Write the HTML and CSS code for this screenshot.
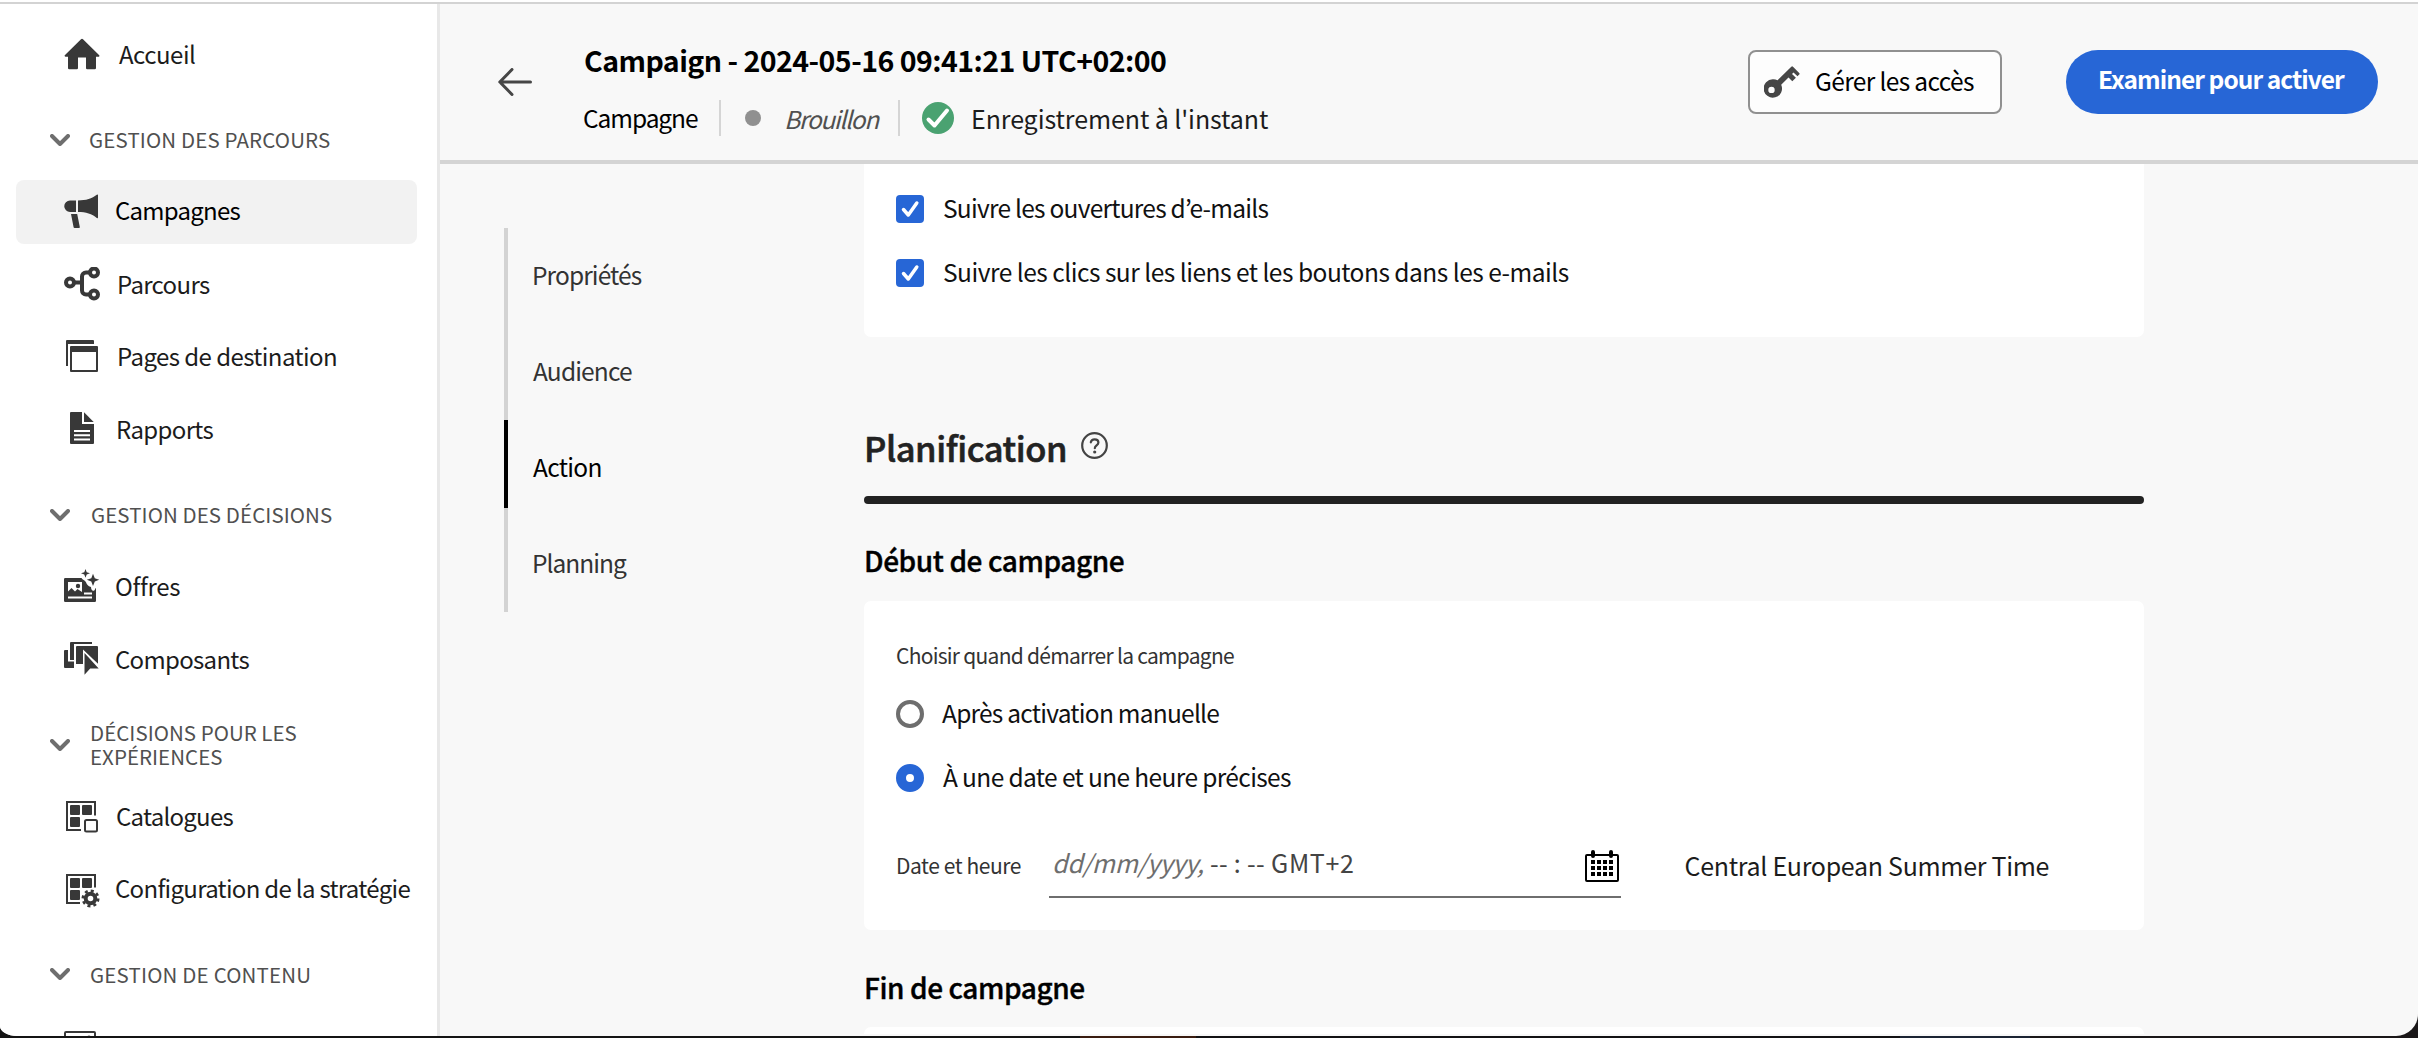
FILE: index.html
```html
<!DOCTYPE html>
<html lang="fr">
<head>
<meta charset="utf-8">
<title>Campagne</title>
<link rel="stylesheet" href="styles.css">
</head>
<body>
<div class="window">
  <nav class="sidebar">
    <a class="nav-item nav-home">
      <svg class="nav-icon" viewBox="0 0 36 36"><path d="M17 2.200a1.400 1.400 0 0 1 2 0L35 18a1 1 0 0 1-.7 1.800H32V31a1.200 1.200 0 0 1-1.200 1.200H23.200A1.200 1.200 0 0 1 22 31V20.500H14V31a1.200 1.200 0 0 1-1.200 1.200H5.200A1.200 1.200 0 0 1 4 31V19.800H1.600A1 1 0 0 1 1 18z"/></svg>
      <span>Accueil</span>
    </a>
    <div class="nav-group">
      <svg class="chevron" viewBox="0 0 20 12"><path d="M2 2l8 8 8-8"/></svg>
      <span>GESTION DES PARCOURS</span>
    </div>
    <a class="nav-item nav-campaigns selected">
      <svg class="nav-icon" viewBox="0 0 36 36"><path d="M12 6.500V18H6A5.700 5.700 0 0 1 6 6.500zM14 6.500C22 6.500 28 4.500 32.800.8 33.400.4 34 .6 34 1.200V23.500c0 .7-.7.8-1.200.4C28 20 22 18 14 18zM7 20h6.200l2.600 13a.9.9 0 0 1-.9 1.100H10.600a1 1 0 0 1-1-.8z"/></svg>
      <span>Campagnes</span>
    </a>
    <a class="nav-item nav-journeys">
      <svg class="nav-icon line" viewBox="0 0 36 36"><g stroke-width="4"><circle cx="6" cy="15.500" r="4"/><circle cx="30" cy="5.500" r="4"/><circle cx="30" cy="27.500" r="4"/><path d="M10 15.500h8M26 5.500h-4a4 4 0 0 0-4 4v14a4 4 0 0 0 4 4h4"/></g></svg>
      <span>Parcours</span>
    </a>
    <a class="nav-item nav-pages">
      <svg class="nav-icon" viewBox="0 0 36 36"><path d="M3 0h26a1 1 0 0 1 1 1v3H4v22H2V1a1 1 0 0 1 1-1z"/><path fill-rule="evenodd" d="M7 6h26a1 1 0 0 1 1 1v24a1 1 0 0 1-1 1H7a1 1 0 0 1-1-1V7a1 1 0 0 1 1-1zm1 6v18h24V12z"/></svg>
      <span>Pages de destination</span>
    </a>
    <a class="nav-item nav-reports">
      <svg class="nav-icon" viewBox="0 0 36 36"><path fill-rule="evenodd" d="M7 0h11v12h12v19a1 1 0 0 1-1 1H7a1 1 0 0 1-1-1V1a1 1 0 0 1 1-1zm3 18v2h16v-2zm0 4.300v2h16v-2zm0 4.300v2h16v-2z"/><path d="M20 .3L29.700 10H20z"/></svg>
      <span>Rapports</span>
    </a>
    <div class="nav-group nav-decisions">
      <svg class="chevron" viewBox="0 0 20 12"><path d="M2 2l8 8 8-8"/></svg>
      <span>GESTION DES DÉCISIONS</span>
    </div>
    <a class="nav-item nav-offers">
      <svg class="nav-icon" viewBox="0 0 36 36"><path fill-rule="evenodd" d="M1.200 9H17.500c1 2 3.500 2.200 4.500 4.200.8 1.800 1.800 4 5 4.800.2 2.500 1 3.800 2.200 3.800 1 0 1.800-1 2.300-2.600l.5-.2V31.800A1.200 1.200 0 0 1 30.800 33H1.200A1.200 1.200 0 0 1 0 31.800V10.200A1.200 1.200 0 0 1 1.200 9zM4 13v9.500l3.500-3.500 3.500 3.500 2.500-2.500 4.500 3V13zM20 23.500v2h8v-2zM4 27.500v2h24v-2z"/><circle cx="14" cy="17" r="2.200"/><path d="M21.500 0l1.200 3.200L26 4.300l-3.300 1.200-1.200 3.300-1.200-3.300L17 4.300l3.300-1.100zM29 4.800l1.800 4.400 4.400 1.600-4.400 1.700L29 17l-1.700-4.500-4.500-1.700 4.500-1.600z"/></svg>
      <span>Offres</span>
    </a>
    <a class="nav-item nav-components">
      <svg class="nav-icon" viewBox="0 0 36 36"><path d="M1 8h3v11.500h6V26H1a1 1 0 0 1-1-1V9a1 1 0 0 1 1-1z"/><path d="M7 0h21v2H10v16H6V1a1 1 0 0 1 1-1z"/><path d="M13 4h20a1 1 0 0 1 1 1v16.800L19 7.500V22h-7V5a1 1 0 0 1 1-1z"/><path d="M20.500 11L34.700 26.500h-8.500L20.500 32.800z"/></svg>
      <span>Composants</span>
    </a>
    <div class="nav-group nav-experience">
      <svg class="chevron" viewBox="0 0 20 12"><path d="M2 2l8 8 8-8"/></svg>
      <span>DÉCISIONS POUR LES<br>EXPÉRIENCES</span>
    </div>
    <a class="nav-item nav-catalogs">
      <svg class="nav-icon" viewBox="0 0 36 36"><path class="frame" d="M31 16.500V3H3v28h14"/><rect x="6" y="6" width="10" height="10" rx="1"/><rect x="18" y="6" width="10" height="10" rx="1"/><rect x="6" y="18" width="10" height="10" rx="1"/><rect class="frame" x="21" y="21" width="12" height="11.500" rx="1.500"/></svg>
      <span>Catalogues</span>
    </a>
    <a class="nav-item nav-strategy">
      <svg class="nav-icon" viewBox="0 0 36 36"><path class="frame" d="M31 15.500V3H3v28h13"/><rect x="6" y="6" width="10" height="10" rx="1"/><rect x="18" y="6" width="10" height="10" rx="1"/><rect x="6" y="18" width="10" height="10" rx="1"/><circle class="gear-body" cx="26.500" cy="26.500" r="4.800"/><circle class="gear-teeth" cx="26.500" cy="26.500" r="7.700"/></svg>
      <span>Configuration de la stratégie</span>
    </a>
    <div class="nav-group nav-content">
      <svg class="chevron" viewBox="0 0 20 12"><path d="M2 2l8 8 8-8"/></svg>
      <span>GESTION DE CONTENU</span>
    </div>
    <a class="nav-item">
      <svg class="nav-icon" viewBox="0 0 36 36"><rect class="frame" x="1" y="3" width="30" height="26" rx="1"/><circle cx="25" cy="9" r="2.400"/></svg>
    </a>
  </nav>

  <div class="workspace">
    <header class="topbar">
      <svg class="back" viewBox="0 0 34 28"><path d="M32.500 14H2M14 1.500L1.800 14 14 26.500"/></svg>
      <div class="heading">
        <h1>Campaign - 2024-05-16 09:41:21 UTC+02:00</h1>
        <div class="meta">
          <span class="kind">Campagne</span>
          <span class="status"><i class="dot"></i><em>Brouillon</em></span>
          <svg class="saved-icon" viewBox="0 0 32 32"><circle cx="16" cy="16" r="16"/><path d="M6.500 17.500l6 6L25 8.500"/></svg>
          <span class="saved">Enregistrement à l'instant</span>
        </div>
      </div>
      <div class="actions">
        <button class="btn-access">
          <svg class="key" viewBox="0 0 36 32"><path fill-rule="evenodd" d="M9.200 13.300c1.600 0 3 .4 4.300 1L27.300.8a1.200 1.200 0 0 1 1.700 0l6.200 6.200a1 1 0 0 1 0 1.500l-1.700 1.700-4-3.800-1.500 1.500 3.900 3.800-3.600 3.500-3.800-3.700-7.300 7.200A9.200 9.200 0 1 1 9.200 13.300zM7.500 20.700a3.200 3.200 0 1 0 0 6.400 3.200 3.200 0 0 0 0-6.400z"/></svg>
          <span>Gérer les accès</span>
        </button>
        <button class="btn-review"><span>Examiner pour activer</span></button>
      </div>
    </header>

    <div class="content">
      <ul class="steps">
        <li class="s-properties">Propriétés</li>
        <li class="s-audience">Audience</li>
        <li class="s-action current">Action</li>
        <li class="s-planning">Planning</li>
      </ul>

      <main class="form">
        <section class="card tracking">
          <label class="option"><svg class="box" viewBox="0 0 28 28"><path d="M7.500 14.500l4.800 5.500L20.800 8"/></svg><span class="t-opens">Suivre les ouvertures d’e-mails</span></label>
          <label class="option"><svg class="box" viewBox="0 0 28 28"><path d="M7.500 14.500l4.800 5.500L20.800 8"/></svg><span class="t-clicks">Suivre les clics sur les liens et les boutons dans les e-mails</span></label>
        </section>

        <div class="section-title">
          <h2>Planification</h2>
          <svg class="help" viewBox="0 0 27 27"><circle cx="13.500" cy="13.500" r="12.300"/><path d="M9.800 10.300C10.200 8.300 11.600 7.300 13.600 7.300c2.200 0 3.800 1.200 3.800 3.200 0 2.800-3.600 2.900-3.600 5.700"/><circle class="point" cx="13.700" cy="20" r="1.600"/></svg>
        </div>
        <div class="rule"></div>

        <h3 class="start-title">Début de campagne</h3>
        <section class="card schedule">
          <p class="hint">Choisir quand démarrer la campagne</p>
          <label class="option"><i class="radio"></i><span class="t-manual">Après activation manuelle</span></label>
          <label class="option"><i class="radio checked"></i><span class="t-date">À une date et une heure précises</span></label>
          <div class="date-row">
            <span class="date-label">Date et heure</span>
            <div class="date-field">
              <em>dd/mm/yyyy,</em><span class="time">-- : --</span><span class="zone">GMT+2</span>
              <svg class="calendar" viewBox="0 0 34 32"><rect class="outline" x="1" y="5" width="32" height="26" rx="1"/><path class="rings" d="M8 2v4M26 2v4"/><path d="M6 10h4v4H6zM12 10h4v4h-4zM18 10h4v4h-4zM24 10h4v4h-4zM6 16h4v4H6zM12 16h4v4h-4zM18 16h4v4h-4zM24 16h4v4h-4zM6 22h4v4H6zM12 22h4v4h-4zM18 22h4v4h-4zM24 22h4v4h-4z"/></svg>
            </div>
            <span class="timezone">Central European Summer Time</span>
          </div>
        </section>

        <h3 class="end-title">Fin de campagne</h3>
        <section class="card ending"></section>
      </main>
    </div>
  </div>
</div>
</body>
</html>
```
FILE: styles.css
```css
* { box-sizing: border-box; margin: 0; padding: 0; }

html, body { height: 1038px; overflow: hidden; }

body {
  background: linear-gradient(90deg, #141414 0 1080px, #3a1c10 1080px 1196px, #121113 1196px 1900px, #1b2433 1900px 2030px, #1a1718 2030px);
  font-family: "Noto Sans CJK JP", "Source Sans Pro", sans-serif;
  font-size: 24.5px;
  color: #1c1c1c;
}

.window {
  display: flex;
  height: 1036px;
  padding-top: 4px;
  overflow: hidden;
  background: linear-gradient(#fff 0 2px, #d3d3d3 2px 4px, #f8f8f8 4px);
  border-radius: 0 0 22px 17px / 0 0 22px 10px;
}

span, em, li, h1, h2, h3, p { white-space: nowrap; }

/* Sidebar */
.sidebar {
  flex: none;
  display: flex;
  flex-direction: column;
  width: 440px;
  height: 1032px;
  padding: 15px 20px 0 16px;
  overflow: hidden;
  background: #fff;
  border-right: 3px solid #e8e8e8;
}

.nav-item {
  flex: none;
  display: flex;
  align-items: center;
  height: 64px;
  margin: 4.330px 0;
  padding-left: 48px;
  border-radius: 8px;
  font-size: 24px;
  line-height: 32px;
}
.nav-item span { padding-bottom: 3px; }
.nav-item.selected { background: #f2f2f2; color: #000; }
.nav-icon { flex: none; width: 36px; height: 36px; margin-right: 15px; fill: #383838; }
.nav-icon .frame { fill: none; stroke: #383838; stroke-width: 2; }
.nav-icon.line { fill: none; stroke: #383838; }
.gear-body { fill: none; stroke: #383838; stroke-width: 4; }
.gear-teeth { fill: none; stroke: #383838; stroke-width: 2.600; stroke-dasharray: 3.000 3.0476; }

.nav-home .nav-icon { margin-right: 19px; }
.nav-journeys .nav-icon, .nav-pages .nav-icon { margin-right: 17px; }
.nav-reports .nav-icon, .nav-catalogs .nav-icon { margin-right: 16px; }

.nav-home { letter-spacing: -0.490px; }
.nav-campaigns { letter-spacing: -0.750px; }
.nav-campaigns span { padding-bottom: 5px; }
.nav-journeys { letter-spacing: -0.660px; }
.nav-pages { letter-spacing: -0.560px; }
.nav-reports { letter-spacing: -0.650px; }
.nav-offers { letter-spacing: -0.320px; }
.nav-components { letter-spacing: -0.690px; }
.nav-catalogs { letter-spacing: -0.750px; }
.nav-strategy { letter-spacing: -0.690px; }

.nav-group {
  flex: none;
  display: flex;
  align-items: center;
  height: 84.400px;
  padding: 12px 0 0 34px;
  font-size: 20.500px;
  line-height: 24.300px;
  letter-spacing: 0.140px;
  color: #505050;
}
.nav-group span { padding-bottom: 1px; }
.chevron { flex: none; width: 20px; height: 12px; margin-right: 19px; fill: none; stroke: #6e6e6e; stroke-width: 4; stroke-linecap: round; stroke-linejoin: round; }
.nav-decisions { letter-spacing: 0.080px; }
.nav-decisions .chevron { margin-right: 21px; }
.nav-experience { letter-spacing: 0.030px; }
.nav-experience .chevron { margin-right: 20px; }
.nav-content { letter-spacing: 0.180px; }
.nav-content .chevron { margin-right: 20px; }

/* Top bar */
.workspace { flex: 1; display: flex; flex-direction: column; min-width: 0; }
.topbar {
  flex: none;
  display: flex;
  align-items: flex-start;
  height: 160px;
  padding: 38px 40px 0 58px;
  background: #f8f8f8;
  border-bottom: 4px solid #d4d4d4;
}
.back { width: 34px; height: 28px; margin: 26px 52px 0 0; fill: none; stroke: #464646; stroke-width: 3; stroke-linecap: round; stroke-linejoin: round; }
h1 { height: 36px; font-size: 28.500px; line-height: 36px; font-weight: 700; letter-spacing: -0.530px; color: #000; }
.meta { display: flex; align-items: center; height: 36px; margin-top: 22px; line-height: 35px; }
.kind { width: 138px; height: 36px; margin-left: -1px; border-right: 2px solid #d5d5d5; letter-spacing: -1.070px; color: #000; }
.status { display: flex; align-items: center; width: 179px; height: 36px; padding-left: 24px; border-right: 2px solid #d5d5d5; }
.dot { width: 16px; height: 16px; margin-right: 23px; border-radius: 50%; background: #909090; }
.status em { letter-spacing: -1.300px; color: #505050; }
.saved-icon { width: 32px; height: 32px; margin: 0 17px 0 22px; fill: #4aa271; }
.saved-icon path { fill: none; stroke: #fff; stroke-width: 4; stroke-linecap: round; stroke-linejoin: round; }
.saved { font-size: 25px; letter-spacing: -0.090px; }

.actions { display: flex; gap: 64px; margin: 8px 0 0 auto; }
.actions button { display: flex; align-items: center; height: 64px; font: inherit; line-height: 36px; }
.btn-access { width: 254px; padding-left: 14px; border: 2px solid #909090; border-radius: 8px; background: #fdfdfd; color: #000; letter-spacing: -0.640px; }
.btn-access span { padding-bottom: 2px; }
.key { width: 36px; height: 32px; margin-right: 15px; fill: #464646; }
.btn-review { width: 312px; padding-left: 32px; border: 0; border-radius: 32px; background: #2766d6; color: #fff; }
.btn-review span { padding-bottom: 6px; font-weight: 700; letter-spacing: -0.950px; }

/* Step rail */
.content { flex: 1; display: flex; min-height: 0; overflow: hidden; }
.steps { flex: none; width: 360px; height: 384px; margin: 64px 0 0 64px; list-style: none; background: linear-gradient(90deg, #d3d3d3 4px, transparent 4px); }
.steps li { height: 96px; padding: 0 0 2px 28px; line-height: 94px; color: #333; }
.steps .current { color: #000; background: linear-gradient(#000, #000) 0 0 / 4px 88px no-repeat; }
.s-properties { letter-spacing: -0.900px; }
.steps .s-audience, .steps .s-action { padding-left: 29px; }
.s-audience { letter-spacing: -0.850px; }
.s-action { letter-spacing: -0.700px; }
.s-planning { letter-spacing: -0.980px; }

/* Form */
.form { flex: none; width: 1280px; height: 872px; }
.card { background: #fff; border-radius: 7px; }
.tracking { height: 173px; padding: 13px 32px 0; border-radius: 0 0 7px 7px; }
.option { display: flex; align-items: center; height: 64px; line-height: 36px; color: #111; }
.option span { padding-bottom: 3px; }
.option .t-opens { padding-bottom: 2px; }
.box { width: 28px; height: 28px; margin-right: 19px; border-radius: 4px; background: #2766d6; fill: none; stroke: #fff; stroke-width: 3.500; stroke-linecap: round; stroke-linejoin: round; }
.t-opens { letter-spacing: -0.750px; }
.t-clicks { letter-spacing: -0.500px; }

.section-title { display: flex; align-items: flex-start; margin-top: 90px; height: 40px; }
h2 { font-size: 34.500px; line-height: 40px; font-weight: 500; letter-spacing: -0.450px; color: #222; -webkit-text-stroke: 0.600px #222; }
.help { width: 27px; height: 27px; margin: 5px 0 0 14px; fill: none; stroke: #444; stroke-width: 2.200; stroke-linecap: round; }
.help .point { fill: #444; stroke: none; }
.rule { height: 8px; margin-top: 29px; border-radius: 4px; background: #222; }

h3 { height: 32px; font-size: 28px; line-height: 32px; font-weight: 500; color: #000; -webkit-text-stroke: 0.400px #000; }
.start-title { margin-top: 40px; letter-spacing: -0.400px; }
.schedule { height: 329px; margin-top: 25px; padding: 40px 32px 0; }
.hint { height: 28px; margin-bottom: 13px; font-size: 21px; line-height: 28px; letter-spacing: -0.730px; color: #333; }
.radio { width: 28px; height: 28px; margin-right: 18px; border: 4px solid #6e6e6e; border-radius: 50%; }
.radio.checked { border: 10px solid #2766d6; margin-right: 19px; }
.t-manual { letter-spacing: -0.760px; }
.t-date { letter-spacing: -0.630px; }
.schedule .option span { padding-bottom: 2px; }

.date-row { display: flex; align-items: center; height: 64px; margin-top: 24px; line-height: 36px; }
.date-label { width: 153px; padding-bottom: 2px; font-size: 21px; letter-spacing: -0.430px; color: #333; }
.date-field { display: flex; align-items: center; width: 572px; height: 64px; padding: 0 2px 0 3px; border-bottom: 2px solid #6e6e6e; font-size: 25px; color: #444; }
.date-field span, .date-field em { padding-bottom: 6px; }
.date-field em { width: 158px; letter-spacing: -0.310px; color: #6e6e6e; }
.time { width: 61px; letter-spacing: 0.300px; }
.zone { letter-spacing: 0.660px; }
.calendar { width: 34px; height: 32px; margin: 2px 0 0 auto; fill: #000; }
.calendar .outline { fill: none; stroke: #000; stroke-width: 2; }
.calendar .rings { stroke: #000; stroke-width: 4; stroke-linecap: round; }
.timezone { margin-left: 63.500px; padding-bottom: 2px; font-size: 25px; letter-spacing: -0.300px; }

.end-title { margin-top: 41px; letter-spacing: -0.420px; }
.ending { height: 7px; margin-top: 24px; border-radius: 7px 7px 0 0; }
```
